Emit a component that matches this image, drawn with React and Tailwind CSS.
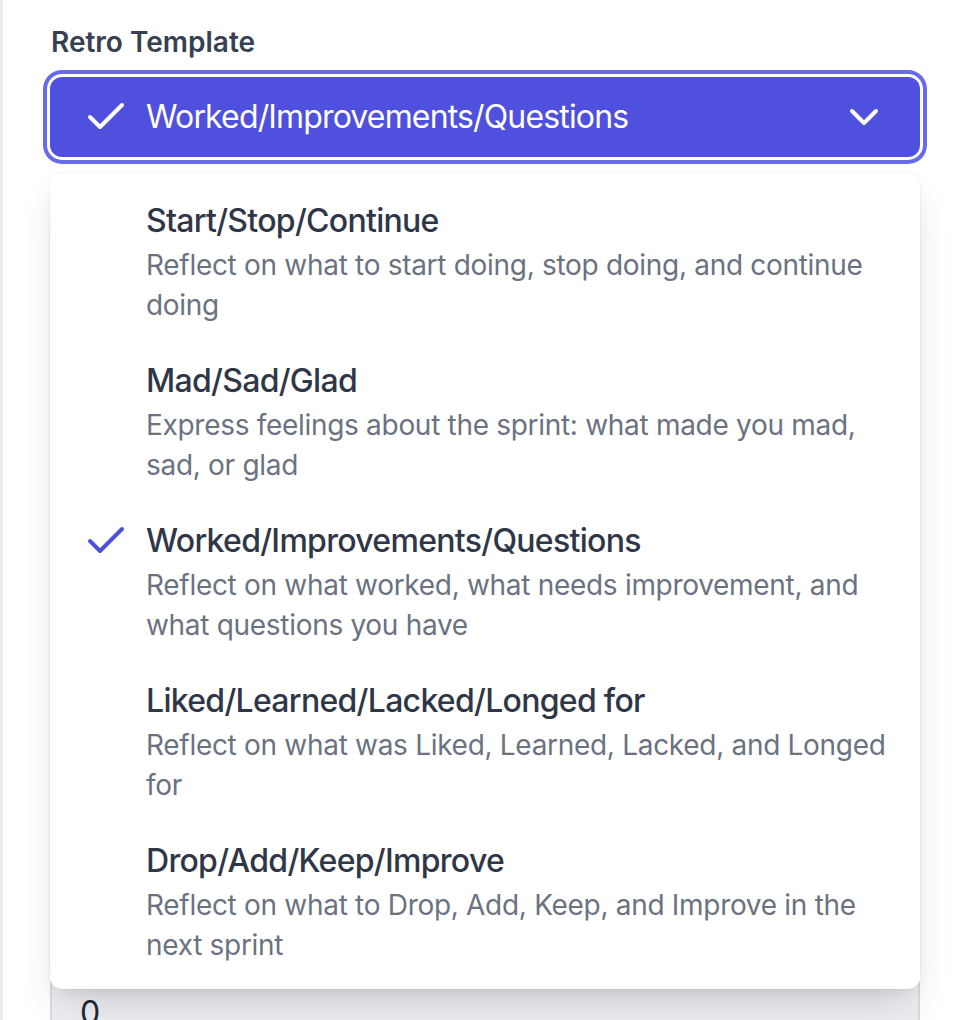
import { Check, ChevronDown } from "lucide-react";

const TEMPLATES = [
  {
    id: "ssc",
    name: "Start/Stop/Continue",
    desc: "Reflect on what to start doing, stop doing, and continue doing",
  },
  {
    id: "msg",
    name: "Mad/Sad/Glad",
    desc: "Express feelings about the sprint: what made you mad, sad, or glad",
  },
  {
    id: "wiq",
    name: "Worked/Improvements/Questions",
    desc: "Reflect on what worked, what needs improvement, and what questions you have",
  },
  {
    id: "llll",
    name: "Liked/Learned/Lacked/Longed for",
    desc: "Reflect on what was Liked, Learned, Lacked, and Longed for",
  },
  {
    id: "daki",
    name: "Drop/Add/Keep/Improve",
    desc: "Reflect on what to Drop, Add, Keep, and Improve in the next sprint",
  },
];

function Option({ item, selected }) {
  return (
    <li className="relative py-4 pl-24 pr-8 cursor-default select-none">
      {selected && (
        <span className="absolute left-8 top-4 flex h-12 items-center text-[#4f50dd]">
          <Check size={48} strokeWidth={2} />
        </span>
      )}
      <p className="text-[32px] leading-[48px] font-medium tracking-[-0.7px] text-[#2f3747]">{item.name}</p>
      <p className="text-[28px] leading-[40px] tracking-[-0.3px] text-[#6b7280]">{item.desc}</p>
    </li>
  );
}

export default function App() {
  const selectedId = "wiq";
  const selected = TEMPLATES.find(t => t.id === selectedId);

  return (
    <div className="flex min-h-[1020px] w-[966px] overflow-hidden bg-white font-['Inter',sans-serif]">
      <div className="w-[3px] shrink-0 bg-[#e9edf2]" />
      <div className="w-[917px] shrink-0 pl-[47px] pt-[22px]">
        <label className="block text-[28px] leading-[40px] font-semibold text-[#374151] pl-[1px]">
          Retro Template
        </label>

        <div className="relative mt-[15px]">
          <button
            type="button"
            className="flex h-[80px] w-full items-center gap-4 rounded-[12px] bg-[#4f50dd] px-8 text-left text-white shadow-[0_0_0_3px_#ffffff,0_0_0_7px_#676beb]"
          >
            <Check size={48} strokeWidth={2} className="shrink-0" />
            <span className="flex-1 truncate text-[32px] leading-[48px] tracking-[-0.85px]">{selected.name}</span>
            <ChevronDown size={48} strokeWidth={2} className="shrink-0" />
          </button>

          <ul className="absolute left-0 right-0 top-[96px] z-10 rounded-[12px] bg-white py-2 shadow-[0_20px_40px_-8px_rgba(0,0,0,0.14),0_8px_16px_-6px_rgba(0,0,0,0.08),0_0_0_1px_rgba(0,0,0,0.03)]">
            {TEMPLATES.map(t => (
              <Option key={t.id} item={t} selected={t.id === selectedId} />
            ))}
          </ul>
        </div>

        <div className="mt-[816px]">
          <div className="h-[80px] w-full rounded-[12px] border-2 border-[#d7dbe0] bg-[#eceef1] px-7 pt-[14px] text-[32px] leading-[48px] text-[#1f2937]">
            0
          </div>
        </div>
      </div>
    </div>
  );
}
